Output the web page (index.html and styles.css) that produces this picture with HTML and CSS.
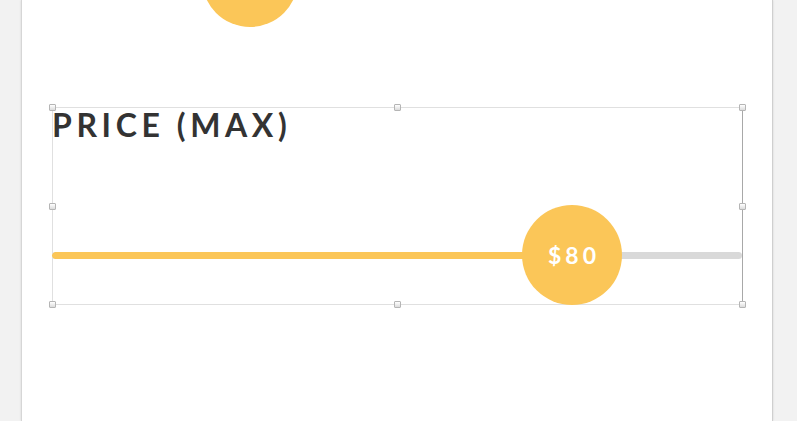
FILE: index.html
```html
<!DOCTYPE html>
<html>
<head>
<meta charset="utf-8">
<link rel="stylesheet" href="styles.css">
</head>
<body>
<div class="page">
  <div class="prev-thumb"></div>
  <div class="selection">
    <div class="title">PRICE (MAX)</div>
    <div class="slider">
      <div class="track"><div class="fill" style="width:75.4%"></div></div>
      <div class="thumb" style="left:470px">$80</div>
    </div>
    <span class="handle h-tl"></span>
    <span class="handle h-tc"></span>
    <span class="handle h-tr"></span>
    <span class="handle h-ml"></span>
    <span class="handle h-mr"></span>
    <span class="handle h-bl"></span>
    <span class="handle h-bc"></span>
    <span class="handle h-br"></span>
  </div>
</div>
</body>
</html>
```

FILE: styles.css
```css
html, body {
  margin: 0;
  height: 100%;
  background: #f2f2f2;
  overflow: hidden;
}
.page {
  box-sizing: border-box;
  margin: 0 24px 0 21px;
  width: 752px;
  height: 421px;
  background: #fff;
  border-left: 1px solid #d6d6d6;
  border-right: 1px solid #cfcfcf;
  box-shadow: 0 0 2px rgba(0,0,0,0.12);
  padding: 0 0 0 30px;
  overflow: hidden;
}
.prev-thumb {
  width: 96px;
  height: 96px;
  border-radius: 50%;
  background: #fbc658;
  margin: -69px 0 0 150px;
}
.selection {
  position: relative;
  box-sizing: border-box;
  margin-top: 80px;
  width: 691px;
  height: 198px;
  border: 1px solid #e0e0e0;
  border-right-color: #a8a8a8;
  display: flex;
  flex-direction: column;
}
.title {
  font-family: Lato, "Open Sans", sans-serif;
  font-weight: 700;
  font-size: 32px;
  line-height: 36px;
  letter-spacing: 4.6px;
  color: #333;
  margin: -1px 0 0 -1px;
}
.slider {
  position: relative;
  margin: 109px 0 0 -1px;
  height: 7px;
}
.track {
  height: 7px;
  width: 690px;
  border-radius: 4px;
  background: #d9d9d9;
  overflow: hidden;
}
.fill {
  height: 100%;
  background: #fbc658;
  border-radius: 4px 0 0 4px;
}
.thumb {
  position: absolute;
  top: -47px;
  width: 100px;
  height: 100px;
  border-radius: 50%;
  background: #fbc658;
  color: #fff;
  font-family: Lato, "Open Sans", sans-serif;
  font-weight: 700;
  font-size: 23px;
  letter-spacing: 4px;
  display: flex;
  align-items: center;
  justify-content: center;
  padding-left: 4px;
  box-sizing: border-box;
}
.handle {
  position: absolute;
  width: 7px;
  height: 7px;
  box-sizing: border-box;
  border: 1px solid #b5b5b5;
  border-radius: 1px;
  background: linear-gradient(#ffffff, #dcdcdc);
}
.h-tl { left: -4px; top: -4px; }
.h-tc { left: 341px; top: -4px; }
.h-tr { right: -4px; top: -4px; }
.h-ml { left: -4px; top: 95px; }
.h-mr { right: -4px; top: 95px; }
.h-bl { left: -4px; bottom: -4px; }
.h-bc { left: 341px; bottom: -4px; }
.h-br { right: -4px; bottom: -4px; }
```
